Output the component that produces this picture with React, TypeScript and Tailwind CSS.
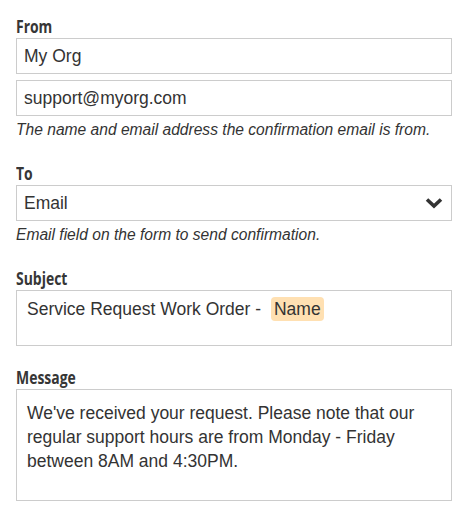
const labelCls =
  "block w-max origin-left scale-x-[0.82] text-[17px] leading-5 font-bold text-[#363636] [font-family:'Open_Sans',sans-serif]";
const inputCls =
  "h-9 w-full border border-[#cccccc] bg-white px-[7px] text-[17.5px] text-[#333333] flex items-center";
const helpCls = "mt-1 text-[15.6px] leading-5 italic text-[#333333]";

function Chevron() {
  return (
    <svg width="18" height="12" viewBox="0 0 18 12" className="text-[#333333]">
      <path d="M2 2.5 L9 9 L16 2.5" fill="none" stroke="currentColor" strokeWidth="3.6" strokeLinecap="butt" strokeLinejoin="miter" />
    </svg>
  );
}

export default function App() {
  return (
    <div className="min-h-[523px] bg-white pt-[17px] pl-4 [font-family:'Liberation_Sans',Arial,sans-serif]">
      <div className="w-[436px]">
        <section>
          <label className={labelCls}>From</label>
          <div className="mt-[1px] flex flex-col gap-[6px]">
            <div className={inputCls}>My Org</div>
            <div className={inputCls}>support@myorg.com</div>
          </div>
          <p className={helpCls}>The name and email address the confirmation email is from.</p>
        </section>

        <section className="mt-6">
          <label className={labelCls}>To</label>
          <div className={`${inputCls} mt-[1px] justify-between pr-2`}>
            <span>Email</span>
            <Chevron />
          </div>
          <p className={helpCls}>Email field on the form to send confirmation.</p>
        </section>

        <section className="mt-6">
          <label className={labelCls}>Subject</label>
          <div className="mt-[1px] h-14 border border-[#cccccc] px-[10px] pt-[6px] text-[17.5px] leading-6 text-[#333333]">
            Service Request Work Order -{" "}
            <span className="ml-[5px] inline-block rounded bg-[#ffe0b2] px-[3px]">Name</span>
          </div>
        </section>

        <section className="mt-[22px]">
          <label className={labelCls}>Message</label>
          <div className="mt-[1px] h-[112px] border border-[#cccccc] px-[10px] pt-[11px] text-[17.5px] leading-6 text-[#333333]">
            We've received your request. Please note that our regular support hours are from Monday - Friday between
            8AM and 4:30PM.
          </div>
        </section>
      </div>
    </div>
  );
}
